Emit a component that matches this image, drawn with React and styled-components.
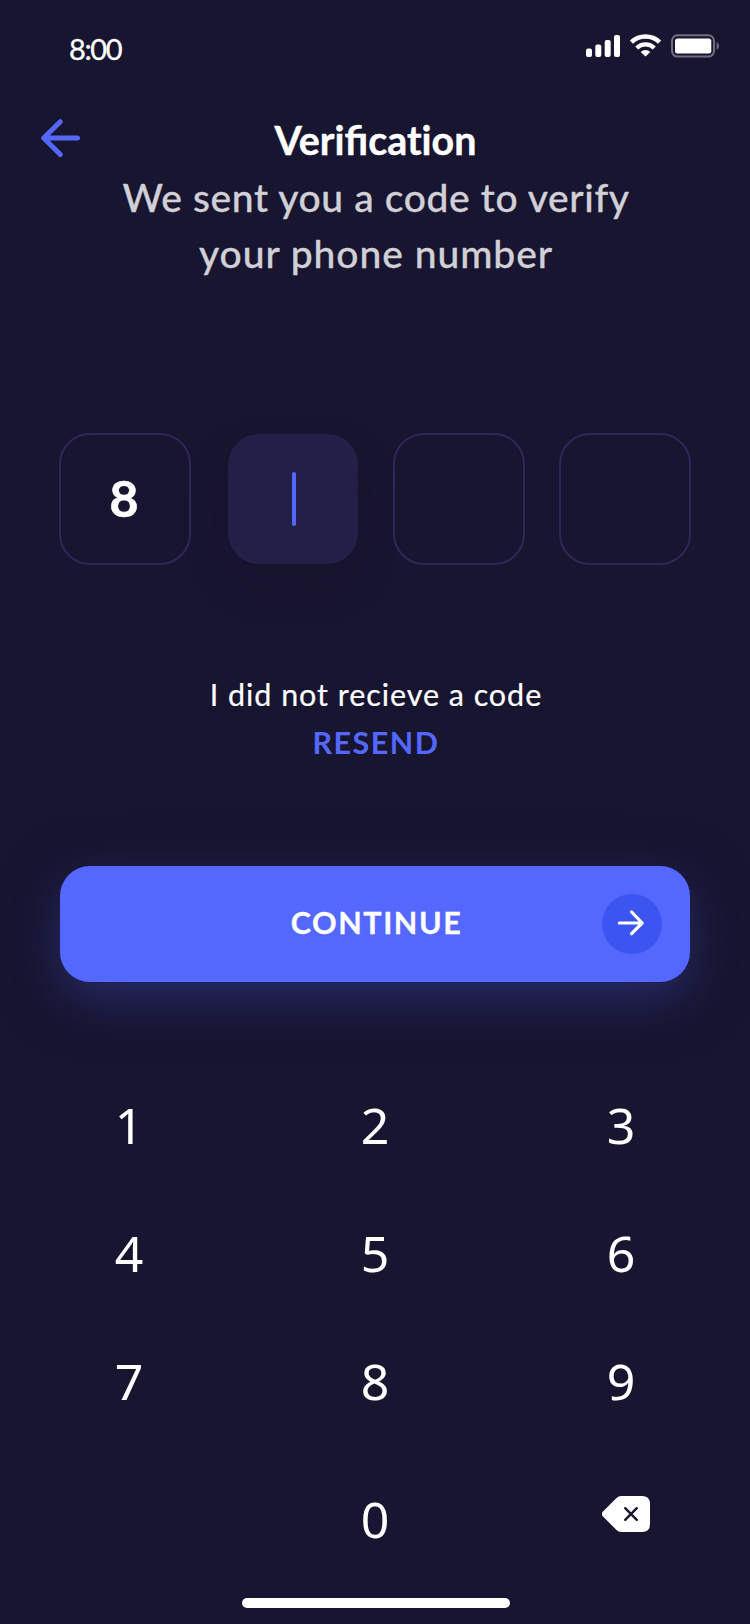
import React from "react";
import styled, { createGlobalStyle } from "styled-components";

const GlobalStyle = createGlobalStyle`
  * { box-sizing: border-box; }
  body { margin: 0; background: #181530; }
  button { font: inherit; color: inherit; border: 0; padding: 0; background: none; }
`;

const Screen = styled.main`
  width: 750px;
  height: 1624px;
  display: flex;
  flex-direction: column;
  background: #181530;
  color: #fff;
  font-family: Lato, "Liberation Sans", sans-serif;
  overflow: hidden;
`;

const StatusBar = styled.header`
  height: 92px;
  padding: 0 30px 0 69px;
  display: flex;
  justify-content: space-between;
  align-items: center;
`;

const Time = styled.span`
  padding-top: 5px;
  font-size: 29px;
  letter-spacing: -1.35px;
  -webkit-text-stroke: 0.3px currentColor;
`;

const StatusIcons = styled.svg`
  display: block;
  width: 136px;
  height: 26px;
`;

const TitleBar = styled.div`
  height: 77px;
  padding: 18px 38px 0;
  display: grid;
  grid-template-columns: 46px 1fr 46px;
  align-items: start;
`;

const BackButton = styled.button`
  width: 46px;
  height: 56px;
  display: flex;
  align-items: center;
`;

const Title = styled.h1`
  margin: 0;
  padding-left: 1px;
  font-size: 39.4px;
  line-height: 59px;
  font-weight: 700;
  text-align: center;
  -webkit-text-stroke: 0.4px currentColor;
`;

const PlainLetters = styled.span`
  font-variant-ligatures: none;
`;

const Subtitle = styled.p`
  margin: 0;
  height: 264px;
  padding-left: 2px;
  font-size: 39px;
  line-height: 56px;
  font-weight: 500;
  text-align: center;
  color: #d1d0d6;
  -webkit-text-stroke: 0.3px currentColor;
`;

const Line = styled.span`
  display: block;
  letter-spacing: ${(p) => p.$spacing}px;
`;

const CodeRow = styled.div`
  height: 132px;
  padding: 0 59px;
  display: flex;
  justify-content: space-between;
  align-items: center;
`;

const CodeCell = styled.div`
  width: ${(p) => (p.$active ? 130 : 132)}px;
  height: ${(p) => (p.$active ? 130 : 132)}px;
  margin-left: ${(p) => (p.$active ? 3 : 0)}px;
  display: flex;
  align-items: center;
  justify-content: center;
  border: ${(p) => (p.$active ? "0" : "2px solid #2f2759")};
  border-radius: 31px;
  background: ${(p) => (p.$active ? "#232047" : "transparent")};
  box-shadow: ${(p) => (p.$active ? "0 20px 44px rgba(16, 14, 36, 0.22)" : "none")};
  font-size: 50px;
  line-height: 50px;
  font-weight: 700;
  padding: 0 2px 2px 0;
  -webkit-text-stroke: 0.6px currentColor;
`;

const Caret = styled.span`
  width: 4px;
  height: 54px;
  margin: 2px 0 0 4px;
  border-radius: 2px;
  background: #5468ff;
`;

const ResendBlock = styled.section`
  height: 301px;
  padding: 105px 0 0 2px;
  display: flex;
  flex-direction: column;
  align-items: center;
  font-size: 30.5px;
  line-height: 48px;
  -webkit-text-stroke: 0.2px currentColor;
`;

const ResendLink = styled.button`
  color: #5468ff;
  font-weight: 700;
  -webkit-text-stroke: 0;
  letter-spacing: ${(p) => p.$spacing}px;
`;

const ContinueButton = styled.button`
  width: 630px;
  height: 116px;
  flex: none;
  margin: 0 60px;
  padding: 0 28px;
  display: grid;
  grid-template-columns: 60px 1fr 60px;
  align-items: center;
  border-radius: 30px;
  background: #5468ff;
  box-shadow: 0 16px 50px rgba(84, 104, 255, 0.29), 0 14px 60px rgba(20, 20, 42, 0.7);
`;

const ContinueLabel = styled.span`
  grid-column: 2;
  font-size: 30.5px;
  line-height: 40px;
  padding: 0 0 4px 3px;
  font-weight: 700;
  text-align: center;
  letter-spacing: 1.6px;
  -webkit-text-stroke: 0.3px currentColor;
`;

const ArrowCircle = styled.span`
  width: 60px;
  height: 60px;
  display: flex;
  align-items: center;
  justify-content: center;
  border-radius: 50%;
  background: #3d55f0;
`;

const Keypad = styled.div`
  height: 532px;
  padding: 0 6px;
  margin-top: 79px;
  display: grid;
  grid-template-columns: repeat(3, 246px);
  grid-template-rows: repeat(3, 128px) 148px;
  font-family: "Noto Sans", "Open Sans", sans-serif;
  font-size: 50px;
  line-height: 60px;
`;

const Key = styled.button`
  display: flex;
  align-items: center;
  justify-content: center;
`;

const DeleteKey = styled(Key)`
  padding: 0 0 10px 10px;
`;

const HomeIndicator = styled.div`
  width: 268px;
  height: 10px;
  flex: none;
  margin: 5px 0 0 242px;
  border-radius: 5px;
  background: #fff;
`;

const keys = ["1", "2", "3", "4", "5", "6", "7", "8", "9"];

export default function App() {
  return (
    <>
      <GlobalStyle />
      <Screen>
        <StatusBar>
          <Time>8:00</Time>
          <StatusIcons viewBox="0 0 136 26" fill="#fff" aria-hidden="true">
            <rect x="2" y="15.5" width="6" height="8.5" rx="2" />
            <rect x="11.3" y="11.5" width="6" height="12.5" rx="2" />
            <rect x="20.7" y="7" width="6" height="17" rx="2" />
            <rect x="30" y="2" width="6" height="22" rx="2" />
            <g fill="none" stroke="#fff">
              <path d="M47.4 9.2A20.4 20.4 0 0 1 75.6 9.2" strokeWidth="4.6" />
              <path d="M52.7 15A12.5 12.5 0 0 1 70.3 15" strokeWidth="4.2" />
            </g>
            <path d="M61.5 23.6L56.7 18.9A7.2 7.2 0 0 1 66.3 18.9Z" />
            <g opacity=".38">
              <rect x="88" y="2.3" width="42" height="21.3" rx="5.5" fill="none" stroke="#fff" strokeWidth="2" />
              <path d="M132.6 9Q135 10.3 135 13T132.6 17Z" />
            </g>
            <rect x="91" y="5.4" width="36.3" height="15" rx="2.5" />
          </StatusIcons>
        </StatusBar>
        <TitleBar>
          <BackButton aria-label="Back">
            <svg width="46" height="44" viewBox="0 0 46 44" fill="none" stroke="#5468ff" strokeWidth="5" strokeLinecap="round" strokeLinejoin="round">
              <path d="M39.5 22H5.7M22.3 5.7L5.7 22L22.3 38.5" />
            </svg>
          </BackButton>
          <Title>
            Verifi<PlainLetters>cation</PlainLetters>
          </Title>
        </TitleBar>
        <Subtitle>
          <Line $spacing={0.62}>We sent you a code to verify</Line>
          <Line $spacing={0.95}>your phone number</Line>
        </Subtitle>
        <CodeRow>
          <CodeCell>8</CodeCell>
          <CodeCell $active>
            <Caret />
          </CodeCell>
          <CodeCell />
          <CodeCell />
        </CodeRow>
        <ResendBlock>
          <Line $spacing={0.95}>I did not recieve a code</Line>
          <ResendLink $spacing={1.5}>RESEND</ResendLink>
        </ResendBlock>
        <ContinueButton>
          <ContinueLabel>CONTINUE</ContinueLabel>
          <ArrowCircle>
            <svg width="30" height="30" viewBox="0 0 30 30" fill="none" stroke="#fff" strokeWidth="3.2" strokeLinecap="round" strokeLinejoin="round">
              <path d="M2.3 14H25.2M14.6 3L25.2 14L14.6 24.7" />
            </svg>
          </ArrowCircle>
        </ContinueButton>
        <Keypad>
          {keys.map((k) => (
            <Key key={k}>{k}</Key>
          ))}
          <span />
          <Key>0</Key>
          <DeleteKey aria-label="Delete">
            <svg width="48" height="36" viewBox="0 0 48 36">
              <path d="M19 0H40Q48 0 48 8V28Q48 36 40 36H19Q16.5 36 14.5 34L1 20.5Q-1.2 18 1 15.5L14.5 2Q16.5 0 19 0Z" fill="#fff" />
              <path d="M23.2 12.2L34.8 23.8M34.8 12.2L23.2 23.8" stroke="#181530" strokeWidth="2.4" strokeLinecap="round" />
            </svg>
          </DeleteKey>
        </Keypad>
        <HomeIndicator />
      </Screen>
    </>
  );
}
